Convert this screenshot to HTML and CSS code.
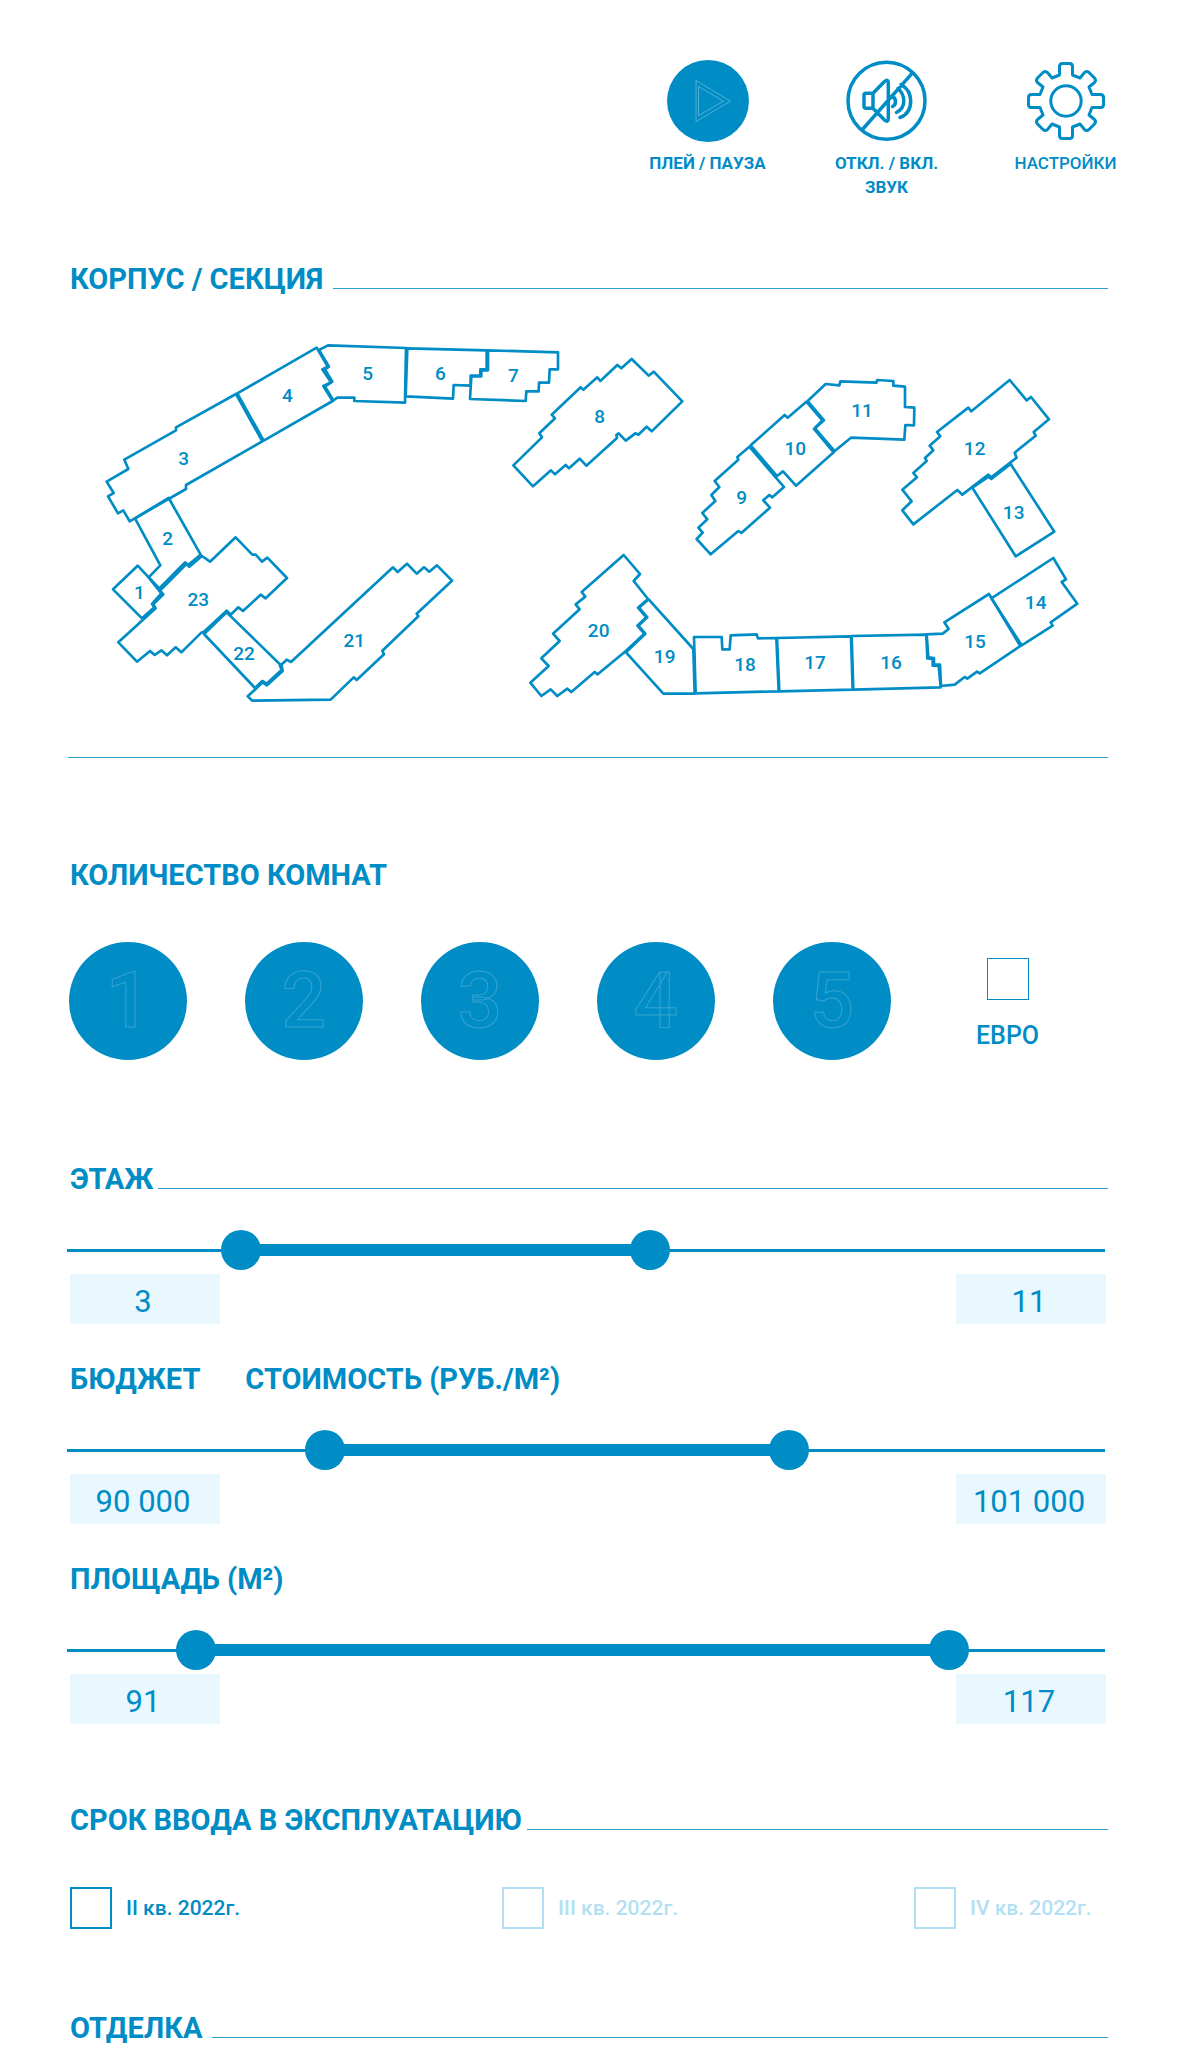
FILE: index.html
```html
<!DOCTYPE html>
<html lang="ru">
<head>
<meta charset="utf-8">
<meta name="viewport" content="width=device-width, initial-scale=1">
<title>Выбор квартиры</title>
<link rel="stylesheet" href="styles.css">
</head>
<body>
<header class="toolbar">
  <button class="tool" type="button">
    <svg class="tool-icon" viewBox="0 0 82 82" aria-hidden="true">
      <circle class="disc" cx="41" cy="41" r="41"/>
      <path class="ghost" d="M29 20.5V61.5L63.500 41.200ZM31.500 26.500V55.500L56.500 41.200Z"/>
    </svg>
    <span class="tool-label">ПЛЕЙ / ПАУЗА</span>
  </button>
  <button class="tool" type="button">
    <svg class="tool-icon line-icon bold" viewBox="0 0 82 82" aria-hidden="true">
      <circle cx="40.500" cy="40.700" r="38.500"/>
      <path d="M27 33.300H20Q18 33.300 18 35.300V46.300Q18 48.300 20 48.300H27ZM27 33.300L38.500 21.500Q42.300 18.500 42.300 23V58.500Q42.300 63 38.500 60L27 48.300M66.700 12.700L16 70M45 36.500Q49.500 37 49.500 41.500Q49.500 45 46.500 46.500M52 28.500Q57.800 33.500 57.800 41Q57.800 48.500 50.500 52.500M55 24.500Q64.700 30 64.700 41Q64.700 53.500 54 57.500"/>
    </svg>
    <span class="tool-label">ОТКЛ. / ВКЛ.<br>ЗВУК</span>
  </button>
  <button class="tool" type="button">
    <svg class="tool-icon line-icon" viewBox="-41 -41 82 82" aria-hidden="true">
      <defs><path id="cog" d="M-6.500-34.500Q-6.500-37.500-3.500-37.500H3.500Q6.500-37.500 6.500-34.500V-26L14-23L18.500-28.500Q20.500-30.500 23-28.500L28.500-23Q30.500-20.500 28.500-18.500L23-14L26-6.500H34.500"/></defs>
      <circle r="15.200"/>
      <use href="#cog"/><use href="#cog" transform="rotate(90)"/><use href="#cog" transform="rotate(180)"/><use href="#cog" transform="rotate(270)"/>
    </svg>
    <span class="tool-label regular">НАСТРОЙКИ</span>
  </button>
</header>

<main class="filters">
  <section class="buildings">
    <div class="heading"><h2>КОРПУС / СЕКЦИЯ</h2></div>
    <svg class="plan" viewBox="0 0 3120 1170" role="img" aria-label="План корпусов">
      <g class="outlines">
        <polygon points="209,707 242,742 280,790 252,822 259,832 222,865 135,778"/>
        <polygon points="201,565 302,504 398,674 360,705 351,697 274,775 242,742 277,706"/>
        <polygon points="504,192 324,292 324,301 169,389 181,417 116,455 137,489 120,499 150,550 166,541 185,574 354,477 354,465 583,334"/>
        <polygon points="508,190 746,53 779,110 763,118 789,157 766,168 794,213 587,332"/>
        <polygon points="753,60 780,46 1014,54 1011,218 859,213 859,203 808,203 796,211 771,169 793,155 771,118 783,110"/>
        <polygon points="1018,55 1256,61 1256,118 1237,118 1237,137 1208,137 1208,167 1157,165 1155,206 1013,199"/>
        <polygon points="1260,61 1470,67 1470,118 1445,118 1443,158 1413,158 1412,184 1375,184 1373,213 1206,207 1210,139 1240,139 1240,121 1260,121"/>
        <polygon points="1691,87 1742,137 1757,125 1843,214 1751,304 1736,290 1711,314 1702,310 1673,332 1652,310 1645,315 1647,324 1555,407 1535,386 1503,415 1493,405 1461,433 1449,421 1395,469 1336,406 1422,322 1414,310 1461,265 1451,254 1538,172 1546,179 1588,142 1597,153 1648,105 1660,115"/>
        <polygon points="2044,350 2008,381 2011,389 1940,453 1954,471 1930,495 1942,513 1903,549 1918,568 1891,593 1904,608 1886,627 1928,673 2011,603 2020,609 2106,533 2086,511 2104,495 2113,502 2148,471 2123,442"/>
        <polygon points="2048,346 2150,255 2159,263 2215,215 2263,271 2238,297 2297,367 2184,467 2145,424 2127,438"/>
        <polygon points="2219,213 2273,162 2314,166 2317,154 2425,158 2428,150 2476,153 2476,167 2511,170 2511,231 2539,233 2538,286 2512,285 2509,329 2349,323 2300,363 2241,295 2268,271"/>
        <polygon points="2825,150 2876,211 2889,201 2943,268 2897,306 2903,317 2840,368 2846,383 2770,442 2761,434 2683,494 2668,480 2536,583 2503,541 2531,514 2503,479 2547,442 2536,429 2576,393 2571,384 2596,361 2585,347 2617,319 2607,306 2701,233 2710,244"/>
        <polygon points="2713,473 2762,440 2770,447 2828,402 2959,605 2843,679"/>
        <polygon points="2770,805 2956,684 2994,748 2981,756 3028,821 2948,877 2954,887 2861,946"/>
        <polygon points="2763,792 2629,877 2642,897 2624,911 2576,913 2581,982 2598,984 2598,1004 2616,1004 2619,1068 2660,1064 2690,1041 2698,1046 2727,1025 2735,1030 2857,948"/>
        <polygon points="2351,918 2575,914 2578,985 2594,987 2594,1007 2612,1007 2618,1072 2356,1079"/>
        <polygon points="2127,924 2349,919 2354,1079 2134,1084"/>
        <polygon points="1878,921 1961,921 1963,958 1985,958 1988,916 2066,913 2070,925 2125,924 2132,1084 1883,1090"/>
        <polygon points="1742,808 1876,957 1880,1091 1786,1091 1674,967 1732,911 1711,887 1738,862 1713,833"/>
        <polygon points="1667,675 1716,732 1697,753 1740,807 1710,833 1735,862 1708,887 1729,911 1671,965 1589,1033 1580,1026 1510,1086 1498,1076 1468,1098 1448,1078 1420,1098 1387,1058 1442,1008 1420,985 1475,933 1455,911 1535,838 1523,823 1552,800 1541,786"/>
        <polygon points="636,1008 656,989 669,996 975,712 989,726 1017,701 1046,731 1068,712 1084,725 1107,706 1152,752 1046,851 1051,859 943,962 948,973 866,1050 857,1042 788,1109 553,1112 539,1099 562,1078 584,1057 597,1066 644,1023"/>
        <polygon points="408,912 476,847 641,1008 643,1018 596,1061 583,1053 561,1074"/>
        <polygon points="503,622 553,674 563,674 582,695 598,683 657,744 593,805 578,794 525,843 511,832 488,854 476,842 408,905 400,908 340,967 323,952 297,976 280,961 260,975 246,963 207,995 151,937 263,835 256,823 286,793 276,782 355,702 364,710 402,678 426,695"/>
      </g>
      <g class="numbers">
        <text x="214" y="806">1</text><text x="299" y="645">2</text><text x="347" y="405">3</text>
        <text x="658" y="216">4</text><text x="899" y="149">5</text><text x="1117" y="149">6</text>
        <text x="1336" y="157">7</text><text x="1595" y="279">8</text><text x="2021" y="522">9</text>
        <text x="2182" y="375">10</text><text x="2382" y="261">11</text><text x="2720" y="374">12</text>
        <text x="2837" y="566">13</text><text x="2903" y="837">14</text><text x="2721" y="954">15</text>
        <text x="2469" y="1017">16</text><text x="2241" y="1017">17</text><text x="2031" y="1024">18</text>
        <text x="1790" y="998">19</text><text x="1592" y="922">20</text><text x="859" y="952">21</text>
        <text x="528" y="991">22</text><text x="391" y="829">23</text>
      </g>
    </svg>
  </section>

  <section class="rooms">
    <h2>КОЛИЧЕСТВО КОМНАТ</h2>
    <div class="room-row">
      <button class="room" type="button">1</button>
      <button class="room" type="button">2</button>
      <button class="room" type="button">3</button>
      <button class="room" type="button">4</button>
      <button class="room" type="button">5</button>
      <label class="euro"><input class="box thin" type="checkbox">ЕВРО</label>
    </div>
  </section>

  <section class="ranges">
    <div class="range">
      <div class="heading tight"><h2>ЭТАЖ</h2></div>
      <div class="slider">
        <div class="span"><div class="bar" style="left:15.4%;right:43.6%"></div></div>
        <input type="range" min="0" max="19.5" step="any" value="3" aria-label="Этаж от">
        <input type="range" min="0" max="19.5" step="any" value="11" aria-label="Этаж до">
      </div>
      <div class="values">
        <input class="value" type="text" value="3" aria-label="Этаж, минимум">
        <input class="value" type="text" value="11" aria-label="Этаж, максимум">
      </div>
    </div>
    <div class="range">
      <div class="modes">
        <button class="mode" type="button">БЮДЖЕТ</button>
        <button class="mode" type="button">СТОИМОСТЬ (РУБ./М²)</button>
      </div>
      <div class="slider">
        <div class="span"><div class="bar" style="left:23.8%;right:29.7%"></div></div>
        <input type="range" min="84370" max="108000" step="any" value="90000" aria-label="Стоимость от">
        <input type="range" min="84370" max="108000" step="any" value="101000" aria-label="Стоимость до">
      </div>
      <div class="values">
        <input class="value" type="text" value="90 000" aria-label="Стоимость, минимум">
        <input class="value" type="text" value="101 000" aria-label="Стоимость, максимум">
      </div>
    </div>
    <div class="range">
      <h2>ПЛОЩАДЬ (М²)</h2>
      <div class="slider">
        <div class="span"><div class="bar" style="left:10.9%;right:13.6%"></div></div>
        <input type="range" min="87.25" max="121.7" step="any" value="91" aria-label="Площадь от">
        <input type="range" min="87.25" max="121.7" step="any" value="117" aria-label="Площадь до">
      </div>
      <div class="values">
        <input class="value" type="text" value="91" aria-label="Площадь, минимум">
        <input class="value" type="text" value="117" aria-label="Площадь, максимум">
      </div>
    </div>
  </section>

  <section class="terms">
    <div class="heading tight"><h2>СРОК ВВОДА В ЭКСПЛУАТАЦИЮ</h2></div>
    <div class="term-row">
      <label class="term"><input class="box" type="checkbox">II кв. 2022г.</label>
      <label class="term off"><input class="box" type="checkbox" disabled>III кв. 2022г.</label>
      <label class="term off"><input class="box" type="checkbox" disabled>IV кв. 2022г.</label>
    </div>
  </section>

  <section class="finish">
    <div class="heading"><h2>ОТДЕЛКА</h2></div>
  </section>
</main>
</body>
</html>
```
FILE: styles.css
```css
:root {
  --blue: #008cc5;
  --rule: #2da2d3;
  --pale: #b2dff4;
  --tint: #e9f7fe;
}

* { box-sizing: border-box; }

body {
  margin: 0;
  background: #fff;
  color: var(--blue);
  font-family: Roboto, "Liberation Sans", sans-serif;
}

button,
input {
  margin: 0;
  padding: 0;
  border: 0;
  background: none;
  color: inherit;
  font: inherit;
}

button { cursor: pointer; }

/* Toolbar */
.toolbar {
  display: flex;
  justify-content: flex-end;
  padding: 60px 27px 0 0;
}

.tool {
  display: flex;
  flex-direction: column;
  align-items: center;
  gap: 9px;
  width: 179px;
}

.tool-icon { width: 82px; height: 82px; }
.disc { fill: var(--blue); }
.ghost { fill: none; stroke: #fff; stroke-opacity: .3; }

.line-icon {
  fill: none;
  stroke: var(--blue);
  stroke-width: 3;
  stroke-linecap: round;
  stroke-linejoin: round;
}

.line-icon.bold { stroke-width: 3.5; }

.tool-label { font-size: 17px; font-weight: 700; line-height: 24px; }
.tool-label.regular { font-weight: 500; }

/* Headings */
.filters { padding: 64px 74px 5px 68px; }

h2,
.mode {
  margin: 0;
  padding-left: 2px;
  font-size: 29px;
  font-weight: 700;
  line-height: 32px;
  white-space: nowrap;
}

.heading { display: flex; align-items: flex-end; gap: 10px; }
.heading.tight { gap: 5px; }

.heading::after {
  content: "";
  flex: 1;
  height: 1px;
  margin-bottom: 6px;
  background: var(--rule);
}

/* Building plan */
.buildings { padding-bottom: 37px; border-bottom: 1px solid var(--rule); }
.plan { display: block; width: 100%; margin-top: 35px; }

.outlines {
  fill: none;
  stroke: var(--blue);
  stroke-width: 8;
  stroke-linejoin: round;
}

.numbers {
  fill: var(--blue);
  font-size: 57px;
  font-weight: 500;
  text-anchor: middle;
}

/* Rooms */
.rooms { margin-top: 101px; }
.room-row { display: flex; gap: 58px; margin-top: 51px; padding-left: 1px; }

.room {
  width: 118px;
  height: 118px;
  border-radius: 50%;
  background: var(--blue);
  color: transparent;
  font-size: 78px;
  font-weight: 500;
  line-height: 118px;
  -webkit-text-stroke: 1px rgb(255 255 255 / .2);
}

.box {
  appearance: none;
  flex: none;
  width: 42px;
  height: 42px;
  border: 2px solid currentColor;
}

.box.thin { border-width: 1px; }

.euro {
  display: flex;
  flex-direction: column;
  align-items: center;
  gap: 20px;
  margin-left: 27px;
  padding-top: 16px;
  font-size: 25px;
  font-weight: 500;
  line-height: 32px;
}

/* Ranges */
.ranges { display: grid; gap: 39px; margin-top: 103px; }

.slider {
  position: relative;
  height: 40px;
  margin: 35px 3px 4px -1px;
  background: linear-gradient(var(--blue), var(--blue)) center / 100% 3px no-repeat;
}

.span { position: absolute; inset: 14px 20px; }
.bar { position: absolute; top: 0; bottom: 0; background: var(--blue); }

.slider input {
  position: absolute;
  inset: 0;
  width: 100%;
  height: 40px;
  appearance: none;
  pointer-events: none;
}

.slider input::-webkit-slider-thumb {
  appearance: none;
  width: 40px;
  height: 40px;
  border-radius: 50%;
  background: var(--blue);
  pointer-events: auto;
}

.values { display: flex; justify-content: space-between; padding: 0 2px; }

.value {
  width: 150px;
  height: 50px;
  padding: 4px 4px 0 0;
  background: var(--tint);
  font-size: 31px;
  text-align: center;
}

.modes { display: flex; gap: 43px; }

/* Completion dates */
.terms { margin-top: 80px; }

.term-row {
  display: grid;
  grid-template-columns: 432fr 412fr 194fr;
  margin-top: 51px;
  padding-left: 2px;
}

.term {
  display: flex;
  align-items: center;
  gap: 14px;
  font-size: 21px;
  font-weight: 500;
  white-space: nowrap;
}

.term.off { color: var(--pale); }

.finish { margin-top: 83px; }
```
